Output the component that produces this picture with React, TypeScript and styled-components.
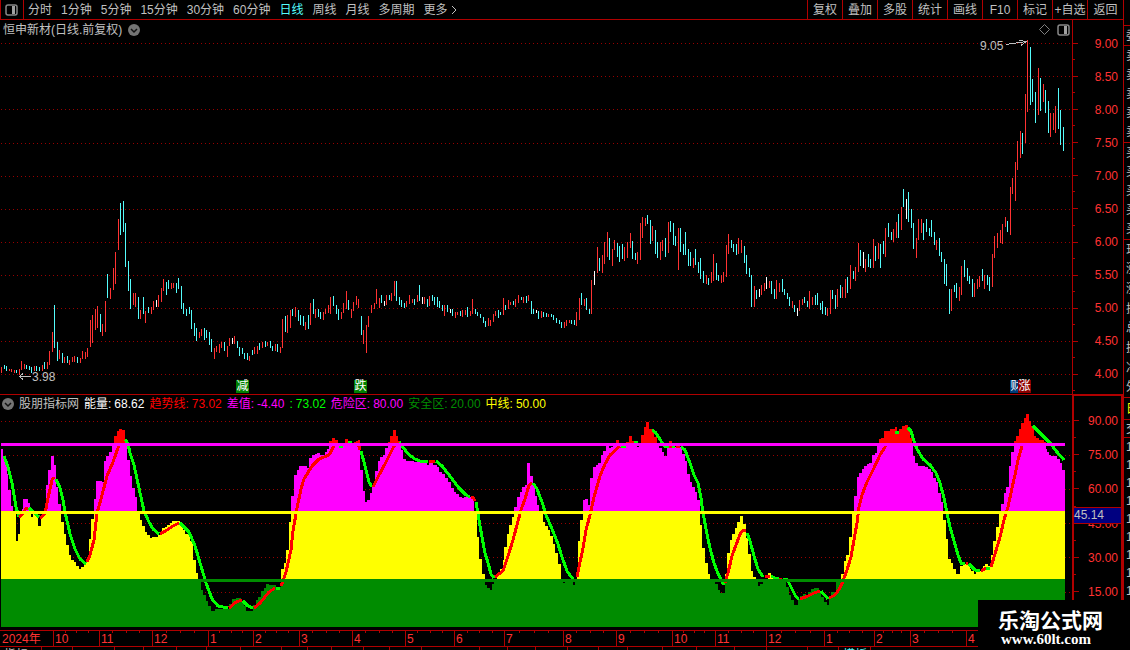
import React from 'react';
import styled, { createGlobalStyle } from 'styled-components';

const LINE = '#b00000';
const RED = '#ff3232';
const CYAN = '#54fcfc';
const GREY = '#c0c0c0';

const PERIODS = ['分时', '1分钟', '5分钟', '15分钟', '30分钟', '60分钟', '日线', '周线', '月线', '多周期'];
const TOOLS = ['复权', '叠加', '多股', '统计', '画线', 'F10', '标记', '+自选', '返回'];
const PRICES = ['9.00', '8.50', '8.00', '7.50', '7.00', '6.50', '6.00', '5.50', '5.00', '4.50', '4.00'];
const LEVELS = ['90.00', '75.00', '60.00', '45.00', '30.00', '15.00'];
const PRICE_GRID = [43, 76, 109, 143, 176, 209, 242, 275, 308, 341, 374];
const LEVEL_GRID = [421, 455, 489, 523, 557, 592];

const READINGS = [
  { label: '能量:', value: '68.62', color: '#ffffff' },
  { label: '趋势线:', value: '73.02', color: '#ff0000' },
  { label: '差值:', value: '-4.40', color: '#ff00ff' },
  { label: ':', value: '73.02', color: '#00ff00' },
  { label: '危险区:', value: '80.00', color: '#ff00ff' },
  { label: '安全区:', value: '20.00', color: '#008c00' },
  { label: '中线:', value: '50.00', color: '#ffff00' },
];

const MONTHS: [string, number][] = [
  ['2024年', 53], ['10', 46], ['11', 53], ['12', 56], ['1', 45], ['2', 46], ['3', 53],
  ['4', 53], ['5', 49], ['6', 50], ['7', 59], ['8', 53], ['9', 56], ['10', 43],
  ['11', 51], ['12', 58], ['1', 50], ['2', 36], ['3', 56], ['4', 157],
];

const TAB_WIDTHS = [42, 31, 42, 29, 33, 30, 34, 41, 26, 24, 32, 26, 32, 58, 28, 28, 32, 31, 29, 35, 34, 38, 32, 41, 31, 32, 252];

// x, high, low, colour (r up, c down, w flat)
const CANDLES = `
1,367,373,r 4,365,369,c 6,366,371,c 9,369,371,r 11,369,372,r 14,370,373,r 16,370,373,c 19,369,375,r 21,361,370,r 24,364,369,r
26,365,369,c 29,366,370,c 31,367,373,c 34,366,371,r 36,366,371,c 39,367,371,c 42,365,371,r 44,362,369,c 47,362,369,r 49,351,365,r
52,332,352,r 54,305,348,c 57,342,361,c 59,350,359,r 62,353,363,c 64,357,363,r 67,356,363,c 69,360,365,r 72,357,362,r 74,356,362,r
77,357,363,c 80,358,363,r 82,351,359,r 85,352,359,r 87,348,357,r 90,320,347,r 92,315,343,r 95,309,330,r 97,306,328,r 100,314,332,c
102,324,336,r 105,301,332,r 107,274,298,c 110,288,299,r 113,268,290,r 115,252,284,r 118,219,250,r 120,203,235,c 123,201,232,c 125,223,267,c
128,261,291,c 130,279,309,c 133,293,305,r 135,293,307,r 138,297,319,c 140,310,319,r 143,297,314,c 145,311,323,r 148,307,313,c 151,307,314,r
153,301,310,r 156,300,307,w 158,295,307,r 161,288,302,r 163,279,291,r 166,282,295,c 168,280,289,c 171,283,289,r 173,283,288,r 176,283,293,c
178,278,289,c 181,286,309,c 183,303,314,c 186,309,316,c 189,307,314,c 191,310,329,c 194,323,336,c 196,328,341,c 199,332,338,r 201,329,336,r
204,328,340,c 206,330,338,c 209,332,345,c 211,339,352,c 214,348,359,r 216,346,352,r 219,344,353,r 221,342,348,r 224,342,351,c 227,346,357,r
229,338,346,r 232,338,344,w 234,336,344,r 237,341,348,c 239,347,356,c 242,348,354,c 244,353,359,c 247,353,360,c 249,356,361,r 252,350,355,c
254,347,354,r 257,346,354,r 259,343,350,c 262,342,348,r 265,341,347,c 267,342,346,r 270,341,348,c 272,346,351,c 275,344,351,r 277,344,352,c
280,347,353,r 282,319,348,r 285,316,332,c 287,315,333,r 290,310,328,r 292,309,316,c 295,307,317,r 298,310,321,c 300,315,325,c 303,316,326,c
305,322,330,r 308,315,329,c 310,303,325,r 313,299,314,c 315,309,318,r 318,309,317,c 320,312,319,c 323,312,320,r 325,309,314,r 328,305,313,r
330,297,314,r 333,296,306,c 336,305,314,c 338,309,320,c 341,312,319,r 343,303,313,r 346,291,309,r 348,300,310,c 351,309,318,r 353,302,311,r
356,296,305,r 358,299,308,r 361,316,335,c 363,330,344,r 366,325,353,r 368,316,327,r 371,305,313,r 374,303,309,r 376,289,304,r 379,298,308,r
381,295,303,c 384,301,306,w 386,295,305,r 389,295,300,c 391,293,301,r 394,281,296,r 396,281,301,c 399,297,305,c 401,300,307,c 404,303,308,c
406,301,307,r 409,295,304,r 412,299,303,r 414,299,305,c 417,295,302,r 419,285,301,c 422,297,304,w 424,297,304,r 427,299,307,c 429,296,306,r
432,295,301,c 434,297,305,c 437,297,307,c 439,301,308,c 442,305,311,c 444,305,316,r 447,305,312,c 450,309,313,w 452,309,316,c 455,312,318,r
457,312,315,r 460,311,316,c 462,310,317,r 465,310,315,r 467,307,317,c 470,311,316,r 472,299,314,r 475,309,314,c 477,312,316,c 480,314,318,c
483,317,323,c 485,321,327,c 488,318,326,r 490,320,326,r 493,314,322,r 495,311,316,r 498,310,318,c 500,312,315,c 503,298,315,r 505,305,310,c
508,300,309,r 510,302,305,r 513,301,305,c 515,299,307,r 518,295,303,r 521,297,300,c 523,297,303,r 526,296,303,c 528,295,301,r 531,301,314,c
533,309,314,c 536,310,313,w 538,311,319,c 541,311,318,r 543,312,317,c 546,313,317,c 548,314,317,r 551,314,317,c 553,315,320,c 556,318,323,c
559,320,324,c 561,322,328,c 564,322,328,r 566,320,326,r 569,320,323,r 571,320,324,c 574,320,325,c 576,312,326,r 579,298,320,r 581,293,305,c
584,299,306,r 586,298,310,c 589,309,314,c 591,280,314,r 594,271,285,w 597,247,273,r 599,258,271,c 602,255,273,r 604,242,264,r 607,232,257,r
609,238,260,c 612,249,266,r 614,240,250,r 617,243,257,c 619,246,262,c 622,244,259,c 624,247,261,r 627,242,258,r 630,233,248,r 632,241,259,c
635,253,260,c 637,252,264,r 640,223,260,r 642,217,238,r 645,218,226,r 647,215,224,c 650,220,244,c 652,226,241,r 655,230,254,c 657,242,258,c
660,242,260,r 662,240,251,r 665,238,257,c 668,222,253,r 670,221,232,c 673,223,245,c 675,236,246,c 678,228,270,r 680,228,252,c 683,244,255,c
685,232,255,c 688,249,266,c 690,252,266,c 693,258,268,r 695,249,265,c 698,262,273,c 700,258,279,c 703,271,283,c 706,275,284,r 708,278,285,c
711,272,283,r 713,254,281,r 716,263,280,c 718,275,281,c 721,275,283,r 723,272,282,r 726,245,277,r 728,234,254,r 731,240,248,c 733,244,252,c
736,244,255,c 738,238,254,r 741,240,253,r 744,246,263,c 746,255,274,c 749,268,277,c 751,275,307,c 754,286,307,r 756,290,299,c 759,289,297,w
761,285,295,r 764,283,291,r 766,277,289,w 769,281,288,r 771,281,294,c 774,289,299,c 776,280,299,r 779,283,292,r 782,279,292,c 784,289,295,c
787,293,299,c 789,297,306,c 792,301,308,r 794,305,312,c 797,308,316,w 799,300,311,r 802,299,305,r 804,297,303,c 807,301,307,c 809,291,309,r
812,297,305,r 815,295,305,c 817,293,305,c 820,303,310,c 822,301,314,c 825,307,315,c 827,308,316,r 830,290,314,r 832,290,299,c 835,295,309,c
837,289,307,r 840,285,298,c 842,287,298,r 845,279,298,r 847,277,293,c 850,265,289,r 853,271,279,c 855,267,281,r 858,243,272,r 860,250,266,c
863,252,268,w 865,259,272,r 868,254,267,c 870,259,268,c 873,239,268,r 875,246,261,c 878,243,259,r 880,244,268,c 883,241,254,c 885,228,257,r
888,223,237,c 891,232,240,c 893,229,242,r 896,222,238,r 898,214,238,c 901,207,230,r 903,189,207,c 906,199,219,w 908,192,222,c 911,209,228,c
913,223,249,c 916,238,258,r 918,219,240,r 921,219,233,r 923,223,240,c 926,219,232,c 929,228,236,c 931,220,237,c 934,232,245,c 936,240,250,r
939,238,256,c 941,252,262,c 944,259,284,c 946,264,286,c 949,289,314,c 951,289,311,r 954,285,292,c 956,283,298,c 959,287,301,r 961,266,295,r
964,260,277,c 967,268,281,c 969,276,284,c 972,279,297,c 974,283,297,r 977,279,289,r 979,276,287,r 982,269,281,c 984,275,289,r 987,275,285,c
989,277,291,c 992,254,287,r 994,236,258,r 997,233,248,r 1000,230,243,r 1002,224,244,r 1005,217,227,r 1007,221,232,c 1010,187,235,r 1012,178,194,r
1015,162,201,r 1017,141,170,r 1020,131,158,r 1022,133,154,c 1025,94,143,r 1027,40,112,r 1030,47,105,c 1032,79,102,c 1035,92,123,c 1038,68,115,r
1040,78,111,c 1043,84,102,r 1045,90,113,c 1048,101,133,c 1050,113,137,r 1053,113,130,r 1055,106,133,r 1058,88,129,c 1060,110,145,c 1063,127,151,c
`;

// left edge and top of every step of the energy histogram
const ENERGY = `
1,449 3,457 5,465 7,474 8,490 11,506 13,514 16,541 18,534 20,515 22,509 23,499 28,503 30,512 31,517 33,514 38,526 41,515 44,510 46,485
48,470 51,456 54,465 56,487 58,504 61,522 64,534 66,545 69,555 71,560 74,562 76,566 79,569 81,567 84,565 86,560 89,539 91,519 94,499 96,481
102,482 104,461 106,456 109,452 112,446 114,436 117,431 119,429 122,430 125,440 127,460 130,476 132,488 135,497 137,513 140,520 142,526 145,532
147,535 150,538 152,537 158,535 162,528 165,527 167,525 170,523 172,521 180,525 183,530 185,534 188,535 190,541 193,560 196,573 198,582 201,590
203,595 206,601 208,606 211,611 215,609 229,604 232,599 236,598 241,601 244,606 246,611 253,605 256,600 258,597 261,591 264,588 266,584 269,585
272,585 276,587 281,569 284,563 286,550 289,522 291,496 294,475 297,470 299,466 307,468 309,458 312,455 315,454 317,453 320,455 325,452 327,449
329,441 332,438 335,440 338,444 340,448 342,443 345,439 348,443 356,441 358,440 360,470 363,491 365,502 367,500 370,493 372,485 375,471 378,461
380,457 383,455 385,448 388,442 390,436 393,430 396,436 398,441 401,450 403,459 406,461 414,462 423,463 427,465 429,461 433,465 437,467 439,472
442,474 445,478 448,482 451,488 454,492 456,494 459,497 462,498 464,497 471,498 474,514 477,537 479,559 482,574 485,585 487,588 490,590 492,584
494,579 497,573 500,569 503,560 504,547 507,534 509,525 512,517 514,507 517,497 520,492 522,487 525,485 527,463 530,476 533,485 535,496 537,505
539,514 543,522 545,526 548,530 550,536 553,544 555,553 558,564 561,580 563,583 565,581 573,585 575,580 577,567 578,541 580,520 583,500 585,499
588,505 590,478 593,467 596,465 598,463 601,455 603,451 606,446 609,448 611,447 613,446 616,440 619,444 626,442 629,436 632,441 634,442 637,447
639,443 641,435 644,427 646,422 649,429 652,432 654,437 657,445 659,448 662,452 664,456 667,448 669,441 672,447 682,454 685,461 687,474 690,482
692,487 695,492 697,500 700,525 702,548 705,563 708,574 710,580 715,584 718,590 720,593 725,574 727,553 730,540 732,534 735,528 737,522 740,516
743,524 746,538 748,554 751,571 753,577 756,581 758,586 760,584 763,580 768,573 771,576 773,580 786,587 789,595 791,600 794,605 798,599 800,596
803,594 806,596 808,592 811,589 814,588 819,592 821,597 824,602 827,605 829,596 831,592 836,582 839,579 841,574 844,561 846,555 849,537 852,514
854,496 857,477 859,473 862,469 864,466 867,464 869,463 872,455 875,453 877,446 879,439 881,438 884,431 890,429 895,427 897,431 899,429 902,426
905,425 908,429 910,438 912,444 913,456 915,463 918,466 925,467 928,469 931,472 933,478 936,482 938,493 941,502 943,520 946,539 948,559 951,563
953,569 956,574 960,566 963,564 970,569 971,571 974,574 976,571 983,566 985,564 988,566 991,555 993,541 996,527 999,514 1001,504 1004,493
1006,487 1009,466 1011,452 1014,441 1016,436 1019,429 1021,423 1024,418 1026,414 1029,421 1031,426 1034,436 1036,438 1039,440 1044,442 1046,449
1047,452 1049,455 1051,456 1057,459 1060,463 1062,470
`;

const FALLING = [
  '4,456 8,467 12,483 16,507 19,517',
  '29,508 33,512 39,517',
  '56,479 60,488 63,500 65,512 70,534 75,549 80,559 86,564',
  '125,439 128,444 130,453 134,465 139,488 144,511 149,522 153,529 159,534',
  '180,523 189,532 195,546 201,566 206,583 212,599 218,606 228,608',
  '243,601 248,606 253,608',
  '276,588 280,588',
  '339,447 343,446',
  '348,442 352,443',
  '361,451 364,462 369,482 372,487',
  '399,442 403,447 408,454 415,459 420,461 428,462',
  '436,461 442,466 450,476 459,488 466,495 470,497',
  '476,502 479,520 482,537 485,553 488,563 491,574 494,578',
  '533,483 537,489 542,502 546,515 552,529 558,544 562,557 567,571 572,578 574,579',
  '621,446 626,446',
  '634,442 638,442',
  '652,430 656,433 661,441 664,446 669,447',
  '672,446 675,446',
  '681,447 685,450 690,463 694,475 698,483 701,498 703,513 707,534 710,548 714,563 717,571 721,580 724,585',
  '747,533 750,541 754,556 758,569 763,577',
  '771,576 775,578 779,579',
  '783,579 787,579 790,585 793,591 796,597 799,599',
  '821,591 828,599',
  '895,432 899,432',
  '908,428 911,431 914,441 917,449 923,459 930,465 936,473 940,483 944,498 947,513 950,527 954,541 958,555 961,563 965,563',
  '969,564 975,570 980,571',
  '986,568 990,568',
  '1033,426 1041,434 1050,443 1057,452 1064,460',
];

const RISING = [
  '19,517 23,514 26,508 28,508',
  '40,518 45,514 48,498 52,480 54,477',
  '87,562 90,555 94,540 97,513 101,499 107,476 113,462 119,445 124,438',
  '160,534 167,530 173,526 179,523',
  '229,608 236,602 242,600',
  '254,608 260,603 269,592 275,588',
  '281,586 283,581 286,572 291,550 293,531 297,508 301,489 304,479 312,466 319,459 329,455 334,446',
  '354,443 358,443 360,450',
  '373,487 379,475 385,464 394,446 398,442',
  '429,462 435,461',
  '471,497 473,497 475,501',
  '495,577 503,571 508,556 513,540 517,525 521,510 525,499 529,485 532,483',
  '577,577 579,567 583,548 586,530 590,515 594,497 600,476 605,464 610,455 620,446',
  '669,446 672,446',
  '676,446 680,446',
  '725,583 728,573 732,556 736,545 741,532 744,530 746,531',
  '765,577 770,576',
  '779,579 782,579',
  '800,599 808,596 814,593 820,591',
  '829,598 835,595 840,588 843,581 847,570 851,557 854,540 857,523 859,507 862,495 867,482 873,470 880,455 885,447 890,437',
  '966,563 968,563',
  '981,571 986,568',
  '991,567 995,554 1000,537 1004,520 1008,507 1012,488 1015,475 1018,460 1022,446 1030,425',
];

// pieces of the neighbouring quote table: height of the block and its rows
const QUOTE_BLOCKS = [
  { height: 20, rows: ['委'] },
  { height: 97, rows: ['卖', '卖', '卖', '卖', '卖'] },
  { height: 97, rows: ['买', '买', '买', '买', '买'] },
  { height: 158, rows: ['现', '涨', '涨', '振', '总', '换', '净', '外'] },
  { height: 22, rows: ['日'], accent: true },
  { height: 18, rows: ['交'] },
  { height: 216, rows: ['1', '1', '1', '1', '1', '1', '1', '1', '1', '1', '1', '1'] },
];

const candlePath = (kind: string) =>
  CANDLES.trim()
    .split(/\s+/)
    .map((item) => item.split(','))
    .filter((item) => item[3] === kind)
    .map(([x, high, low]) => `M${Number(x) + 0.5} ${high}V${low}`)
    .join('');

const energyPath =
  'M1 627' +
  ENERGY.trim()
    .split(/\s+/)
    .map((item) => item.split(','))
    .map(([x, y]) => `H${x}V${y}`)
    .join('') +
  'H1065V627Z';

const PanelIcon: React.FC = () => (
  <svg width="13" height="12" viewBox="0 0 13 12" aria-hidden="true">
    <rect x="1" y="1" width="11" height="10" rx="2" fill="none" stroke="#888888" strokeWidth="1.5" />
    <rect x="7" y="2" width="3" height="8" fill="#a0a0a0" />
  </svg>
);

const ToggleIcon: React.FC = () => (
  <svg width="12" height="12" viewBox="0 0 12 12" aria-hidden="true">
    <circle cx="6" cy="6" r="6" fill="#747474" />
    <path d="M3 5L6 8L9 5" fill="none" stroke="#111111" strokeWidth="1.5" />
  </svg>
);

const App: React.FC = () => {
  return (
    <>
      <GlobalStyle />
      <Page>
        <Main>
          <Toolbar>
            <IconCell aria-label="侧栏">
              <PanelIcon />
            </IconCell>
            <Periods>
              {PERIODS.map((name) => (
                <Period key={name} $active={name === '日线'}>
                  {name}
                </Period>
              ))}
              <Period>
                更多
                <svg width="6" height="10" viewBox="0 0 6 10" aria-hidden="true">
                  <path d="M1 1L5 5L1 9" fill="none" stroke={GREY} />
                </svg>
              </Period>
            </Periods>
            <Tools>
              {TOOLS.map((name) => (
                <Tool key={name}>{name}</Tool>
              ))}
            </Tools>
          </Toolbar>

          <Pane>
            <PlotColumn>
              <PriceHeader>
                <span>恒申新材(日线.前复权)</span>
                <PlainButton aria-label="展开">
                  <ToggleIcon />
                </PlainButton>
                <HeaderIcons>
                  <svg width="11" height="11" viewBox="0 0 11 11" aria-hidden="true">
                    <path d="M5.5 0.5L10.5 5.5L5.5 10.5L0.5 5.5Z" fill="none" stroke="#808080" />
                  </svg>
                  <PanelIcon />
                </HeaderIcons>
              </PriceHeader>
              <Plot>
                <PriceSvg viewBox="0 38 1072 356" preserveAspectRatio="none">
                  {PRICE_GRID.map((y) => (
                    <path key={y} d={`M1 ${y + 0.5}H1072`} stroke="#980000" strokeDasharray="1 3" />
                  ))}
                  <path d={candlePath('r')} stroke={RED} />
                  <path d={candlePath('c')} stroke={CYAN} />
                  <path d={candlePath('w')} stroke="#ffffff" />
                  <path d="M1006 44.5L1026 41.5M1019 40.5L1026 41.5L1021 45.5" fill="none" stroke={GREY} />
                  <path d="M31 376.5H19M23 373.5L19.5 376.5L23 379.5" fill="none" stroke={GREY} />
                </PriceSvg>
                <Mark $left={980} $top={0}>9.05</Mark>
                <Mark $left={32} $top={331}>3.98</Mark>
                <Badge $left={236} $color="#008000">减</Badge>
                <Badge $left={354} $color="#008000">跌</Badge>
                <Badge $left={1010} $color="#003c78">财</Badge>
                <Badge $left={1018} $color="#8c0000">涨</Badge>
              </Plot>
            </PlotColumn>
            <PriceAxis>
              {PRICES.map((price) => (
                <AxisLabel key={price}>{price}</AxisLabel>
              ))}
            </PriceAxis>
          </Pane>

          <Pane>
            <PlotColumn>
              <IndicatorHeader>
                <PlainButton aria-label="展开指标">
                  <ToggleIcon />
                </PlainButton>
                <IndicatorName>股朋指标网</IndicatorName>
                {READINGS.map((item) => (
                  <Reading key={item.label} $color={item.color}>
                    <span>{item.label}</span>
                    <span>{item.value}</span>
                  </Reading>
                ))}
              </IndicatorHeader>
              <IndicatorSvg viewBox="0 412 1072 218" preserveAspectRatio="none">
                <clipPath id="energy">
                  <path d={energyPath} />
                </clipPath>
                {LEVEL_GRID.map((y) => (
                  <path key={y} d={`M1 ${y + 0.5}H1072`} stroke="#980000" strokeDasharray="1 3" />
                ))}
                <g clipPath="url(#energy)">
                  <rect y="412" width="1072" height="32" fill="#ff0000" />
                  <rect y="444" width="1072" height="68" fill="#ff00ff" />
                  <rect y="512" width="1072" height="67" fill="#ffff00" />
                  <rect y="579" width="1072" height="48" fill="#008c00" />
                </g>
                {FALLING.map((points) => (
                  <polyline key={points} points={points} fill="none" stroke="#00ff00" strokeWidth="3" />
                ))}
                {RISING.map((points) => (
                  <polyline key={points} points={points} fill="none" stroke="#ff0000" strokeWidth="3" />
                ))}
                <rect x="1" y="443" width="1064" height="3" fill="#ff00ff" />
                <rect x="1" y="511" width="1064" height="3" fill="#ffff00" />
                <rect x="1" y="579" width="1064" height="3" fill="#008c00" />
              </IndicatorSvg>
            </PlotColumn>
            <LevelAxis>
              {LEVELS.map((level) => (
                <AxisLabel key={level}>{level}</AxisLabel>
              ))}
              <Cursor>45.14</Cursor>
            </LevelAxis>
          </Pane>

          <TimeAxis>
            {MONTHS.map(([name, width], index) => (
              <Month key={index} $width={width}>
                {name}
                {index > 0 && (
                  <Ticks>
                    <i />
                    <i />
                    <i />
                  </Ticks>
                )}
              </Month>
            ))}
          </TimeAxis>
          <Tabs>
            {TAB_WIDTHS.map((width, index) => (
              <Tab key={index} $width={width} $active={index === 25}>
                {index === 0 && '指标'}
                {index === 25 && '模板'}
              </Tab>
            ))}
          </Tabs>
        </Main>

        <QuoteStrip>
          {QUOTE_BLOCKS.map((block, index) => (
            <QuoteBlock key={index} $height={block.height} $accent={block.accent}>
              {block.rows.map((name, row) => (
                <span key={row}>{name}</span>
              ))}
            </QuoteBlock>
          ))}
        </QuoteStrip>

        <Watermark>
          <SiteName>乐淘公式网</SiteName>
          <SiteUrl>www.60lt.com</SiteUrl>
        </Watermark>
      </Page>
    </>
  );
};

const GlobalStyle = createGlobalStyle`
  * {
    box-sizing: border-box;
  }

  body {
    margin: 0;
    background: #000000;
    color: ${GREY};
    font: 12px/18px "Liberation Sans", "Noto Sans CJK SC", sans-serif;
    overflow: hidden;
  }

  button {
    font: inherit;
    color: inherit;
    background: none;
    border: 0;
    padding: 0;
    white-space: nowrap;
  }

  svg {
    display: block;
  }
`;

const Page = styled.div`
  position: relative;
  display: grid;
  grid-template-columns: minmax(0, 1fr) 7px;
  height: 100vh;
  overflow: hidden;
`;

const Main = styled.main`
  min-width: 0;
`;

const Toolbar = styled.nav`
  display: flex;
  height: 20px;
  border-bottom: 1px solid ${LINE};
  border-left: 1px solid ${LINE};
`;

const IconCell = styled.button`
  display: flex;
  align-items: center;
  padding: 0 5px 0 4px;
  border-right: 1px solid ${LINE};
`;

const Periods = styled.div`
  display: flex;
  flex: 1;
  gap: 9px;
  padding-left: 4px;
`;

const Period = styled.button<{ $active?: boolean }>`
  display: flex;
  align-items: center;
  gap: 3px;
  color: ${(p) => (p.$active ? CYAN : GREY)};
`;

const Tools = styled.div`
  display: flex;
`;

const Tool = styled.button`
  width: 35px;
  border-left: 1px solid ${LINE};

  &:last-child {
    width: 36px;
  }
`;

const Pane = styled.section`
  display: grid;
  grid-template-columns: minmax(0, 1fr) 51px;
`;

const PlotColumn = styled.div`
  min-width: 0;
  border-bottom: 1px solid ${LINE};
`;

const PriceHeader = styled.header`
  display: flex;
  align-items: center;
  gap: 6px;
  height: 18px;
  padding: 2px 2px 0 3px;
`;

const PlainButton = styled.button`
  display: flex;
`;

const HeaderIcons = styled.div`
  display: flex;
  gap: 7px;
  margin-left: auto;
`;

const Plot = styled.div`
  position: relative;
`;

const PriceSvg = styled.svg`
  width: 100%;
  height: 356px;
  shape-rendering: crispEdges;
`;

const IndicatorSvg = styled.svg`
  width: 100%;
  height: 218px;
  shape-rendering: crispEdges;
`;

const Mark = styled.span<{ $left: number; $top: number }>`
  position: absolute;
  left: ${(p) => (p.$left / 1072) * 100}%;
  top: ${(p) => p.$top}px;
  line-height: 16px;
`;

const Badge = styled.span<{ $left: number; $color: string }>`
  position: absolute;
  left: ${(p) => (p.$left / 1072) * 100}%;
  top: 342px;
  width: 13px;
  height: 13px;
  line-height: 13px;
  text-align: center;
  color: #ffffff;
  background: ${(p) => p.$color};
`;

const PriceAxis = styled.div`
  display: grid;
  grid-auto-rows: 1fr;
  padding: 7px 5px 3px 0;
  border-left: 1px solid ${LINE};
  border-bottom: 1px solid ${LINE};
`;

const AxisLabel = styled.div`
  position: relative;
  display: flex;
  align-items: center;
  justify-content: flex-end;
  color: ${RED};

  &::before {
    content: '';
    position: absolute;
    left: 0;
    top: 16px;
    width: 5px;
    height: 1px;
    background: ${LINE};
  }

  &::after {
    content: '';
    position: absolute;
    left: 0;
    bottom: 0;
    width: 2px;
    height: 1px;
    background: ${LINE};
  }
`;

const IndicatorHeader = styled.header`
  display: flex;
  align-items: center;
  gap: 5px;
  height: 17px;
  padding-left: 2px;
  white-space: nowrap;
`;

const IndicatorName = styled.span`
  color: ${GREY};
`;

const Reading = styled.span<{ $color: string }>`
  display: flex;
  gap: 3px;
  color: ${(p) => p.$color};
`;

const LevelAxis = styled.div`
  position: relative;
  display: grid;
  grid-auto-rows: 1fr;
  padding: 8px 3px 21px 0;
  border: 2px solid ${LINE};
  border-top-width: 1px;
  border-bottom-width: 1px;
`;

const Cursor = styled.div`
  position: absolute;
  top: 111px;
  left: 0;
  right: 0;
  height: 17px;
  line-height: 15px;
  background: #000080;
  border-top: 1px solid ${LINE};
  border-bottom: 1px solid ${LINE};
`;

const TimeAxis = styled.div`
  display: flex;
  height: 16px;
  border-bottom: 1px solid ${LINE};
`;

const Month = styled.div<{ $width: number }>`
  position: relative;
  flex: none;
  width: ${(p) => (p.$width / 1123) * 100}%;
  padding-left: 1px;
  line-height: 16px;
  white-space: nowrap;
  color: ${RED};
  border-left: 1px solid ${LINE};

  &:first-child {
    border-color: transparent;
  }
`;

const Ticks = styled.span`
  position: absolute;
  inset: 0 0 auto;
  display: flex;
  justify-content: space-evenly;

  i {
    width: 1px;
    height: 2px;
    background: ${LINE};
  }
`;

const Tabs = styled.div`
  display: flex;
  height: 16px;
`;

const Tab = styled.button<{ $width: number; $active?: boolean }>`
  flex: none;
  width: ${(p) => (p.$width / 1123) * 100}%;
  line-height: 16px;
  overflow: hidden;
  text-align: left;
  padding-left: 4px;
  color: ${(p) => (p.$active ? CYAN : GREY)};
  border-right: 1px solid ${LINE};
`;

const QuoteStrip = styled.aside`
  padding-top: 25px;
  border-left: 1px solid ${LINE};
  overflow: hidden;
`;

const QuoteBlock = styled.div<{ $height: number; $accent?: boolean }>`
  display: grid;
  grid-auto-rows: 1fr;
  align-items: center;
  height: ${(p) => p.$height}px;
  padding-left: 2px;
  color: ${(p) => (p.$accent ? '#ffff00' : GREY)};
  border-top: 1px solid ${LINE};
`;

const Watermark = styled.footer`
  position: absolute;
  right: 0;
  bottom: 0;
  width: 152px;
  height: 50px;
  padding: 8px 0 0 20px;
  color: #ffffff;
  background: #000000;
`;

const SiteName = styled.div`
  font: bold 21px/22px "Noto Sans CJK SC", sans-serif;
`;

const SiteUrl = styled.div`
  padding-left: 3px;
  font: bold 15px/18px "Liberation Serif", serif;
`;

export default App;
